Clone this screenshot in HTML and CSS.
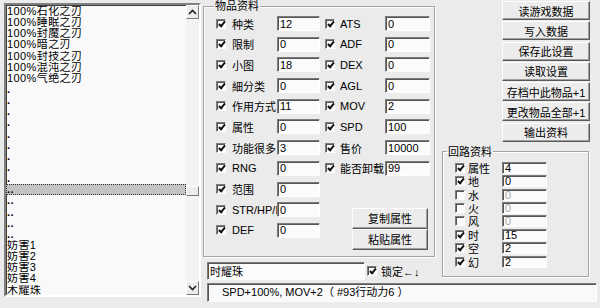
FILE: index.html
```html
<!DOCTYPE html>
<html lang="zh">
<head>
  <meta charset="UTF-8" />
  <title>物品编辑</title>
  <link rel="stylesheet" href="styles.css">
</head>
<body>
  <div class="app">
    <div class="listbox">
      <div class="list">
        <div class="li">100%石化之刃</div>
        <div class="li">100%睡眠之刃</div>
        <div class="li">100%封魔之刃</div>
        <div class="li">100%暗之刃</div>
        <div class="li">100%封技之刃</div>
        <div class="li">100%混沌之刃</div>
        <div class="li">100%气绝之刃</div>
        <div class="li dot">.</div>
        <div class="li dot">.</div>
        <div class="li dot">.</div>
        <div class="li dot">.</div>
        <div class="li dot">.</div>
        <div class="li dot">.</div>
        <div class="li dot">.</div>
        <div class="li dot">.</div>
        <div class="li dot">.</div>
        <div class="li dot selected">..</div>
        <div class="li dot">..</div>
        <div class="li dot">..</div>
        <div class="li dot">..</div>
        <div class="li dot">..</div>
        <div class="li">妨害1</div>
        <div class="li">妨害2</div>
        <div class="li">妨害3</div>
        <div class="li">妨害4</div>
        <div class="li">木耀珠</div>
      </div>
      <div class="scrollbar">
        <div class="sb-btn">
          <svg width="9" height="6" viewBox="0 0 9 6"><path d="M1 5 L4.5 1.5 L8 5" fill="none" stroke="#222" stroke-width="1.6"/></svg>
        </div>
        <div class="sb-track">
          <div class="sb-thumb"></div>
        </div>
        <div class="sb-btn">
          <svg width="9" height="6" viewBox="0 0 9 6"><path d="M1 1 L4.5 4.5 L8 1" fill="none" stroke="#222" stroke-width="1.6"/></svg>
        </div>
      </div>
    </div>

    <div class="workspace">
      <div class="upper">
        <div class="left-col">
          <fieldset class="group items">
            <legend>物品资料</legend>
            <div class="item-grid">
              <div class="col-a">
                <div class="row"><span class="cb on"></span><span class="lbl">种类</span><input type="text" value="12"></div>
                <div class="row"><span class="cb on"></span><span class="lbl">限制</span><input type="text" value="0"></div>
                <div class="row"><span class="cb on"></span><span class="lbl">小图</span><input type="text" value="18"></div>
                <div class="row"><span class="cb on"></span><span class="lbl">細分类</span><input type="text" value="0"></div>
                <div class="row"><span class="cb on"></span><span class="lbl">作用方式</span><input type="text" value="11"></div>
                <div class="row"><span class="cb on"></span><span class="lbl">属性</span><input type="text" value="0"></div>
                <div class="row"><span class="cb on"></span><span class="lbl">功能很多</span><input type="text" value="3"></div>
                <div class="row"><span class="cb on"></span><span class="lbl">RNG</span><input type="text" value="0"></div>
                <div class="row"><span class="cb on"></span><span class="lbl">范围</span><input type="text" value="0"></div>
                <div class="row"><span class="cb on"></span><span class="lbl">STR/HP/E</span><input type="text" value="0"></div>
                <div class="row"><span class="cb on"></span><span class="lbl">DEF</span><input type="text" value="0"></div>
              </div>
              <div class="col-b">
                <div class="row"><span class="cb on"></span><span class="lbl">ATS</span><input type="text" value="0"></div>
                <div class="row"><span class="cb on"></span><span class="lbl">ADF</span><input type="text" value="0"></div>
                <div class="row"><span class="cb on"></span><span class="lbl">DEX</span><input type="text" value="0"></div>
                <div class="row"><span class="cb on"></span><span class="lbl">AGL</span><input type="text" value="0"></div>
                <div class="row"><span class="cb on"></span><span class="lbl">MOV</span><input type="text" value="2"></div>
                <div class="row"><span class="cb on"></span><span class="lbl">SPD</span><input type="text" value="100"></div>
                <div class="row"><span class="cb on"></span><span class="lbl">售价</span><input type="text" value="10000"></div>
                <div class="row"><span class="cb on"></span><span class="lbl">能否卸载</span><input type="text" value="99"></div>
                <div class="copy-btns">
                  <button class="btn">复制属性</button>
                  <button class="btn">粘贴属性</button>
                </div>
              </div>
            </div>
          </fieldset>

          <div class="name-row">
            <input type="text" class="name-input" value="时耀珠">
            <span class="cb on"></span>
            <span class="lock">锁定←↓</span>
          </div>
        </div>

        <div class="right-col">
          <div class="actions">
            <button class="btn">读游戏数据</button>
            <button class="btn">写入数据</button>
            <button class="btn">保存此设置</button>
            <button class="btn">读取设置</button>
            <button class="btn">存档中此物品+1</button>
            <button class="btn">更改物品全部+1</button>
            <button class="btn">输出资料</button>
          </div>

          <fieldset class="group circuit">
            <legend>回路资料</legend>
            <div class="crow"><span class="cb on"></span><span class="clbl">属性</span><input type="text" value="4"></div>
            <div class="crow"><span class="cb on"></span><span class="clbl">地</span><input type="text" value="0"></div>
            <div class="crow"><span class="cb"></span><span class="clbl">水</span><input type="text" class="off" value="0"></div>
            <div class="crow"><span class="cb"></span><span class="clbl">火</span><input type="text" class="off" value="0"></div>
            <div class="crow"><span class="cb"></span><span class="clbl">风</span><input type="text" class="off" value="0"></div>
            <div class="crow"><span class="cb on"></span><span class="clbl">时</span><input type="text" value="15"></div>
            <div class="crow"><span class="cb on"></span><span class="clbl">空</span><input type="text" value="2"></div>
            <div class="crow"><span class="cb on"></span><span class="clbl">幻</span><input type="text" value="2"></div>
          </fieldset>
        </div>
      </div>

      <div class="status">SPD+100%, MOV+2（ #93行动力6 ）</div>
    </div>
  </div>
</body>
</html>
```

FILE: styles.css
```css
body { margin: 0; background: #ebebeb; color: #000; font-family: "Liberation Sans", "Noto Sans CJK SC", sans-serif; font-size: 11px; }
.app { display: flex; width: 600px; height: 308px; padding-left: 4px; box-sizing: border-box; overflow: hidden; }

/* list box */
.listbox { display: flex; margin-top: 3px; width: 197px; height: 294px; box-sizing: border-box; border: 2px solid; border-color: #808080 #fff #fff #808080; box-shadow: inset 1px 1px #404040; background: #f9f9f9; }
.list { flex: 1; padding-top: 1px; overflow: hidden; }
.li { height: 11.15px; line-height: 11px; padding-left: 1px; white-space: nowrap; box-sizing: border-box; letter-spacing: 0.4px; overflow: hidden; }
.li.dot { font-weight: bold; }
.li.selected { background: #c3c3c3; outline: 1px dotted #333; outline-offset: -1px; }
.scrollbar { width: 13px; display: flex; flex-direction: column; background: #f3f3f3; }
.sb-btn { height: 14px; box-sizing: border-box; display: flex; align-items: center; justify-content: center; background: #ececec; border: 1px solid; border-color: #fff #7a7a7a #7a7a7a #fff; }
.sb-track { flex: 1; position: relative; }
.sb-thumb { position: absolute; left: 0; right: 0; top: 167px; height: 8px; background: #ececec; border: 1px solid; border-color: #fff #7a7a7a #7a7a7a #fff; }

/* right side */
.workspace { margin-left: 2px; width: 394px; display: flex; flex-direction: column; }
.upper { display: flex; }
.left-col { width: 232px; }
.right-col { margin-left: 7px; width: 148px; }

.group { margin: 0; border: 1px solid #a2a2a2; box-shadow: inset 1px 1px #fff, 1px 1px #fff; box-sizing: border-box; }
.group legend { line-height: 12px; padding: 0 1px; font-size: 11px; }

.items { height: 257px; padding: 4px 3px 0 12px; }
.items legend { margin-left: -2px; }
.item-grid { display: flex; gap: 5px; }
.col-a, .col-b { display: flex; flex-direction: column; gap: 5.7px; }
.row { display: flex; align-items: center; height: 15px; }
.col-a .cb { margin-right: 6px; }
.col-b .cb { margin-right: 5px; }
.lbl { width: 45px; white-space: nowrap; overflow: visible; }
.col-a input { width: 43px; }
.col-b input { width: 45px; }
.copy-btns { display: flex; flex-direction: column; margin: 26.3px 0 0 27px; }
.copy-btns .btn { width: 76px; height: 21px; }

input { height: 15px; box-sizing: border-box; padding: 0 2px; margin: 0; font: inherit; color: #000; background: #fbfbfb; border: 1px solid; border-color: #7c7c7c #fff #fff #7c7c7c; box-shadow: inset 1px 1px #555; outline: none; }
input.off { color: #a8a8a8; }

.cb { position: relative; width: 10px; height: 10px; flex: none; box-sizing: border-box; background: #fbfbfb; border: 1px solid; border-color: #7c7c7c #fff #fff #7c7c7c; box-shadow: inset 1px 1px #555; }
.cb.on::after { content: ""; position: absolute; left: 2.5px; top: 0; width: 2px; height: 5px; border: solid #111; border-width: 0 2px 2px 0; transform: rotate(40deg); }

.btn { display: block; padding: 0; font: inherit; color: #000; background: #ececec; border: 1px solid; border-color: #fff #5a5a5a #5a5a5a #fff; box-shadow: inset -1px -1px #a0a0a0; }
.actions { display: flex; flex-direction: column; align-items: flex-end; gap: 1.3px; margin-top: 1px; }
.actions .btn { width: 88px; height: 19px; }

.circuit { margin-top: 4px; width: 147px; height: 131px; padding: 4px 3px 0 12px; }
.circuit legend { margin-left: -8px; }
.crow { display: flex; align-items: center; height: 12px; margin-bottom: 1.4px; }
.crow .cb { margin-right: 3px; }
.clbl { width: 34px; }
.crow input { width: 45px; height: 12px; line-height: 10px; }

.name-row { display: flex; align-items: center; margin: 5px 0 0 4px; height: 18px; }
.name-input { width: 158px; height: 18px; }
.name-row .cb { margin-left: 2px; margin-right: 4px; }
.lock { white-space: nowrap; }

.status { margin: 3px 0 0 4px; width: 390px; height: 19px; box-sizing: border-box; padding-left: 14px; line-height: 16px; background: #f9f9f9; border: 1px solid; border-color: #7c7c7c #fff #fff #7c7c7c; box-shadow: inset 1px 1px #555; white-space: nowrap; }
```
